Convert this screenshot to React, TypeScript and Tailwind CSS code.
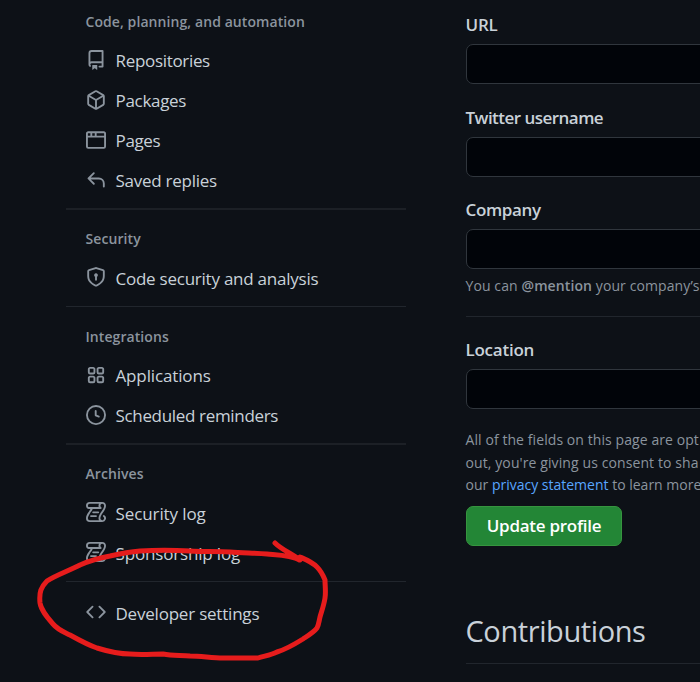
import React from "react";

const paths = {
  repo: "M2 2.5A2.5 2.5 0 0 1 4.5 0h8.75a.75.75 0 0 1 .75.75v12.5a.75.75 0 0 1-.75.75h-2.5a.75.75 0 0 1 0-1.5h1.75v-2h-8a1 1 0 0 0-.714 1.7.75.75 0 1 1-1.072 1.05A2.495 2.495 0 0 1 2 11.5Zm10.5-1h-8a1 1 0 0 0-1 1v6.708A2.486 2.486 0 0 1 4.5 9h8ZM5 12.25a.25.25 0 0 1 .25-.25h3.5a.25.25 0 0 1 .25.25v3.25a.25.25 0 0 1-.4.2l-1.45-1.087a.249.249 0 0 0-.3 0L5.4 15.7a.25.25 0 0 1-.4-.2Z",
  package: "m8.878.392 5.25 3.045c.54.314.872.89.872 1.514v6.098a1.75 1.75 0 0 1-.872 1.514l-5.25 3.045a1.75 1.75 0 0 1-1.756 0l-5.25-3.045A1.75 1.75 0 0 1 1 11.049V4.951c0-.624.332-1.201.872-1.514L7.122.392a1.75 1.75 0 0 1 1.756 0ZM7.875 1.69l-4.63 2.685L8 7.133l4.755-2.758-4.63-2.685a.248.248 0 0 0-.25 0ZM2.5 5.677v5.372c0 .09.047.171.125.216l4.625 2.683V8.432Zm6.25 8.271 4.625-2.683a.25.25 0 0 0 .125-.216V5.677L8.75 8.432Z",
  browser: "M0 2.75C0 1.784.784 1 1.75 1h12.5c.966 0 1.75.784 1.75 1.75v10.5A1.75 1.75 0 0 1 14.25 15H1.75A1.75 1.75 0 0 1 0 13.25ZM14.5 6h-13v7.25c0 .138.112.25.25.25h12.5a.25.25 0 0 0 .25-.25Zm-6-3.5v2h6V2.75a.25.25 0 0 0-.25-.25ZM5 2.5v2h2v-2Zm-3.25 0a.25.25 0 0 0-.25.25V4.5h2v-2Z",
  reply: "M6.78 1.97a.75.75 0 0 1 0 1.06L3.81 6h6.44A4.75 4.75 0 0 1 15 10.75v2.5a.75.75 0 0 1-1.5 0v-2.5a3.25 3.25 0 0 0-3.25-3.25H3.81l2.97 2.97a.749.749 0 0 1-.326 1.275.749.749 0 0 1-.734-.215L1.47 7.28a.75.75 0 0 1 0-1.06l4.25-4.25a.75.75 0 0 1 1.06 0Z",
  shield: "m8.533.133 5.25 1.68A1.75 1.75 0 0 1 15 3.48V7c0 1.566-.32 3.182-1.303 4.682-.983 1.498-2.585 2.813-5.032 3.855a1.697 1.697 0 0 1-1.33 0c-2.447-1.042-4.049-2.357-5.032-3.855C1.32 10.182 1 8.566 1 7V3.48a1.755 1.755 0 0 1 1.217-1.667l5.25-1.68a1.748 1.748 0 0 1 1.066 0Zm-.61 1.429.001.001-5.25 1.68a.251.251 0 0 0-.174.237V7c0 1.36.275 2.666 1.057 3.859.784 1.194 2.121 2.342 4.366 3.298a.196.196 0 0 0 .154 0c2.245-.957 3.582-2.103 4.366-3.297C13.225 9.666 13.5 8.358 13.5 7V3.48a.25.25 0 0 0-.174-.238l-5.25-1.68a.25.25 0 0 0-.153 0ZM9.5 6.5c0 .536-.286 1.032-.75 1.3v2.45a.75.75 0 0 1-1.5 0V7.8A1.5 1.5 0 1 1 9.5 6.5Z",
  apps: "M3.25 1.5h2.5c.966 0 1.75.784 1.75 1.75v2.5A1.75 1.75 0 0 1 5.75 7.5h-2.5A1.75 1.75 0 0 1 1.5 5.75v-2.5c0-.966.784-1.75 1.75-1.75ZM3.25 3a.25.25 0 0 0-.25.25v2.5c0 .138.112.25.25.25h2.5A.25.25 0 0 0 6 5.75v-2.5A.25.25 0 0 0 5.75 3ZM10.25 1.5h2.5c.966 0 1.75.784 1.75 1.75v2.5a1.75 1.75 0 0 1-1.75 1.75h-2.5A1.75 1.75 0 0 1 8.5 5.75v-2.5c0-.966.784-1.75 1.75-1.75Zm0 1.5a.25.25 0 0 0-.25.25v2.5c0 .138.112.25.25.25h2.5a.25.25 0 0 0 .25-.25v-2.5a.25.25 0 0 0-.25-.25ZM3.25 8.5h2.5c.966 0 1.75.784 1.75 1.75v2.5a1.75 1.75 0 0 1-1.75 1.75h-2.5a1.75 1.75 0 0 1-1.75-1.75v-2.5c0-.966.784-1.75 1.75-1.75Zm0 1.5a.25.25 0 0 0-.25.25v2.5c0 .138.112.25.25.25h2.5a.25.25 0 0 0 .25-.25v-2.5a.25.25 0 0 0-.25-.25ZM10.25 8.5h2.5c.966 0 1.75.784 1.75 1.75v2.5a1.75 1.75 0 0 1-1.75 1.75h-2.5a1.75 1.75 0 0 1-1.75-1.75v-2.5c0-.966.784-1.75 1.75-1.75Zm0 1.5a.25.25 0 0 0-.25.25v2.5c0 .138.112.25.25.25h2.5a.25.25 0 0 0 .25-.25v-2.5a.25.25 0 0 0-.25-.25Z",
  clock: "M8 0a8 8 0 1 1 0 16A8 8 0 0 1 8 0ZM1.5 8a6.5 6.5 0 1 0 13 0 6.5 6.5 0 0 0-13 0Zm7-3.25v2.992l2.028.812a.75.75 0 0 1-.557 1.392l-2.5-1A.751.751 0 0 1 7 8.25v-3.5a.75.75 0 0 1 1.5 0Z",
  log: "M5 8.25a.75.75 0 0 1 .75-.75h4a.75.75 0 0 1 0 1.5h-4A.75.75 0 0 1 5 8.25ZM4 10.5A.75.75 0 0 0 4 12h4a.75.75 0 0 0 0-1.5H4Z M13-.005c1.654 0 3 1.328 3 3 0 .982-.338 1.933-.783 2.818-.443.879-1.028 1.758-1.582 2.588l-.011.017c-.568.853-1.104 1.659-1.501 2.446-.398.789-.623 1.494-.623 2.136a1.5 1.5 0 1 0 2.333-1.248.75.75 0 0 1 .834-1.246A3 3 0 0 1 13 16H3a3 3 0 0 1-3-3c0-1.582.891-3.135 1.777-4.506.209-.322.418-.637.623-.946.473-.709.923-1.386 1.287-2.048H2.51c-.576 0-1.381-.133-1.907-.783A2.68 2.68 0 0 1 0 2.995a3 3 0 0 1 3-3Zm0 1.5a1.5 1.5 0 0 0-1.5 1.5c0 .476.223.834.667 1.132A.75.75 0 0 1 11.75 5.5H5.368c-.467 1.003-1.141 2.015-1.773 2.963-.192.289-.381.571-.558.845C2.13 10.711 1.5 11.916 1.5 13A1.5 1.5 0 0 0 3 14.5h7.401A2.989 2.989 0 0 1 10 13c0-.979.338-1.928.784-2.812.441-.874 1.023-1.748 1.575-2.576l.017-.026c.568-.853 1.103-1.658 1.501-2.448.398-.79.623-1.497.623-2.143 0-.838-.669-1.5-1.5-1.5Zm-10 0a1.5 1.5 0 0 0-1.5 1.5c0 .321.1.569.27.778.097.12.325.227.74.227h7.674A2.737 2.737 0 0 1 10 2.995c0-.546.146-1.059.401-1.5Z",
  code: "m11.28 3.22 4.25 4.25a.75.75 0 0 1 0 1.06l-4.25 4.25a.749.749 0 0 1-1.275-.326.749.749 0 0 1 .215-.734L13.94 8l-3.72-3.72a.749.749 0 0 1 .326-1.275.749.749 0 0 1 .734.215Zm-6.56 0a.751.751 0 0 1 1.042.018.751.751 0 0 1 .018 1.042L2.06 8l3.72 3.72a.749.749 0 0 1-.326 1.275.749.749 0 0 1-.734-.215L.47 8.53a.75.75 0 0 1 0-1.06Z",
};

type NavItemProps = {
  icon: keyof typeof paths;
  label: string;
  tracking?: string;
  iconMargin?: string;
};

function NavItem({ icon, label, tracking = "tracking-[-0.26px]", iconMargin = "mb-0.5" }: NavItemProps) {
  return (
    <li className="flex h-10 items-center pl-5">
      <svg viewBox="0 0 16 16" className={`h-5 w-5 shrink-0 overflow-visible fill-[#8b949e] ${iconMargin}`}>
        <path fillRule="evenodd" d={paths[icon]} />
      </svg>
      <a className={`ml-[9.5px] whitespace-nowrap text-[17px] leading-6 text-[#c9d1d9] ${tracking}`}>{label}</a>
    </li>
  );
}

function Heading({ children, className = "" }: { children: React.ReactNode; className?: string }) {
  return (
    <h3 className={`pl-[19.5px] text-[14px] leading-5 font-semibold tracking-[0.08px] whitespace-nowrap text-[#8b949e] ${className}`}>
      {children}
    </h3>
  );
}

function Field({ label, tracking, className = "" }: { label: string; tracking: string; className?: string }) {
  return (
    <div className={className}>
      <label className={`-ml-[0.5px] block h-6 text-[17px] leading-6 font-semibold text-[#c9d1d9] ${tracking}`}>{label}</label>
      <div className="mt-[7px] h-10 w-[300px] rounded-[7px] border border-[#30363d] bg-[#010409]" />
    </div>
  );
}

export default function App() {
  return (
    <div className="relative flex h-[682px] w-[700px] overflow-hidden bg-[#0d1117] font-['Open_Sans','Noto_Sans',sans-serif]">
      <nav className="ml-[66px] w-[340px] shrink-0">
        <Heading className="mt-3">Code, planning, and automation</Heading>
        <ul className="mt-[9px]">
          <NavItem icon="repo" label="Repositories" tracking="tracking-[-0.32px]" />
          <NavItem icon="package" label="Packages" tracking="tracking-[-0.3px]" />
          <NavItem icon="browser" label="Pages" tracking="tracking-[-0.35px]" />
          <NavItem icon="reply" label="Saved replies" />
        </ul>
        <hr className="mt-[7px] h-0.5 border-0 bg-[#1c2026]" />
        <Heading className="mt-[19px]">Security</Heading>
        <ul className="mt-[10px]">
          <NavItem icon="shield" label="Code security and analysis" tracking="tracking-[-0.24px]" iconMargin="mb-1" />
        </ul>
        <hr className="mt-[7px] h-px border-0 bg-[#21262d]" />
        <Heading className="mt-5">Integrations</Heading>
        <ul className="mt-[9px]">
          <NavItem icon="apps" label="Applications" tracking="tracking-[-0.14px]" />
          <NavItem icon="clock" label="Scheduled reminders" tracking="tracking-[-0.33px]" />
        </ul>
        <hr className="mt-[7px] h-0.5 border-0 bg-[#1c2026]" />
        <Heading className="mt-[19px]">Archives</Heading>
        <ul className="mt-[10px]">
          <NavItem icon="log" label="Security log" tracking="tracking-[-0.1px]" iconMargin="mb-1" />
          <NavItem icon="log" label="Sponsorship log" tracking="tracking-[-0.16px]" iconMargin="mb-1" />
        </ul>
        <hr className="mt-[7px] h-px border-0 bg-[#21262d]" />
        <ul className="mt-3">
          <NavItem icon="code" label="Developer settings" tracking="tracking-[-0.21px]" iconMargin="mb-1" />
        </ul>
      </nav>

      <main className="ml-[60px] w-[300px] shrink-0">
        <Field label="URL" tracking="tracking-[-0.25px]" className="mt-[13px]" />
        <Field label="Twitter username" tracking="tracking-[-0.53px]" className="mt-[22px]" />
        <Field label="Company" tracking="tracking-[-0.34px]" className="mt-[21px]" />
        <p className="mt-[6px] -ml-[0.5px] text-[14px] leading-[22px] tracking-[0.1px] whitespace-nowrap text-[#8b949e]">
          You can <span className="font-semibold">@mention</span> your company’s
        </p>
        <hr className="mt-[19px] h-px border-0 bg-[#21262d]" />
        <Field label="Location" tracking="tracking-[-0.25px]" className="mt-[21px]" />
        <p className="mt-5 -ml-[0.5px] text-[14px] leading-[22.5px] whitespace-nowrap text-[#8b949e]">
          <span className="tracking-[0.08px]">All of the fields on this page are opt</span>
          <br />
          <span className="tracking-[0.1px]">out, you're giving us consent to sha</span>
          <br />
          our <a className="text-[#58a6ff]">privacy statement</a> to learn more
        </p>
        <button className="mt-[9.5px] block h-10 w-[156px] rounded-[7px] border border-[#36953f] bg-[#238636] text-[17px] font-semibold tracking-[-0.27px] whitespace-nowrap text-white">
          Update profile
        </button>
        <h2 className="mt-[65px] -ml-[0.5px] text-[29px] leading-10 tracking-[-0.4px] text-[#c9d1d9]">Contributions</h2>
        <hr className="mt-3 h-px border-0 bg-[#21262d]" />
      </main>

      <svg className="pointer-events-none absolute inset-0" width="700" height="682" fill="none" stroke="#e61c1c" strokeWidth="5" strokeLinecap="round" strokeLinejoin="round">
        <path d="M275 543C282 550 291 553 300 560C291 555 279 555 267 554C254 553 242 553 230 552C216 551 203 552 190 551C172 550 156 550 140 551C129 552 119 554 110 556C99 558 89 561 80 565C68 571 54 576 47 581C41 587 39 592 40 603C41 610 47 617 53 624C58 630 64 632 70 635C79 640 88 645 97 648C110 652 119 654 130 654C141 655 153 654 163 654C173 656 181 655 190 656C201 656 212 658 223 658H258C264 656 271 655 277 652C287 649 295 644 303 639C309 635 314 632 317 628C319 624 319 621 320 617C322 610 324 605 325 598C326 592 325 586 325 580C323 575 321 571 317 567C312 562 307 560 300 557L299 560" />
      </svg>
    </div>
  );
}
